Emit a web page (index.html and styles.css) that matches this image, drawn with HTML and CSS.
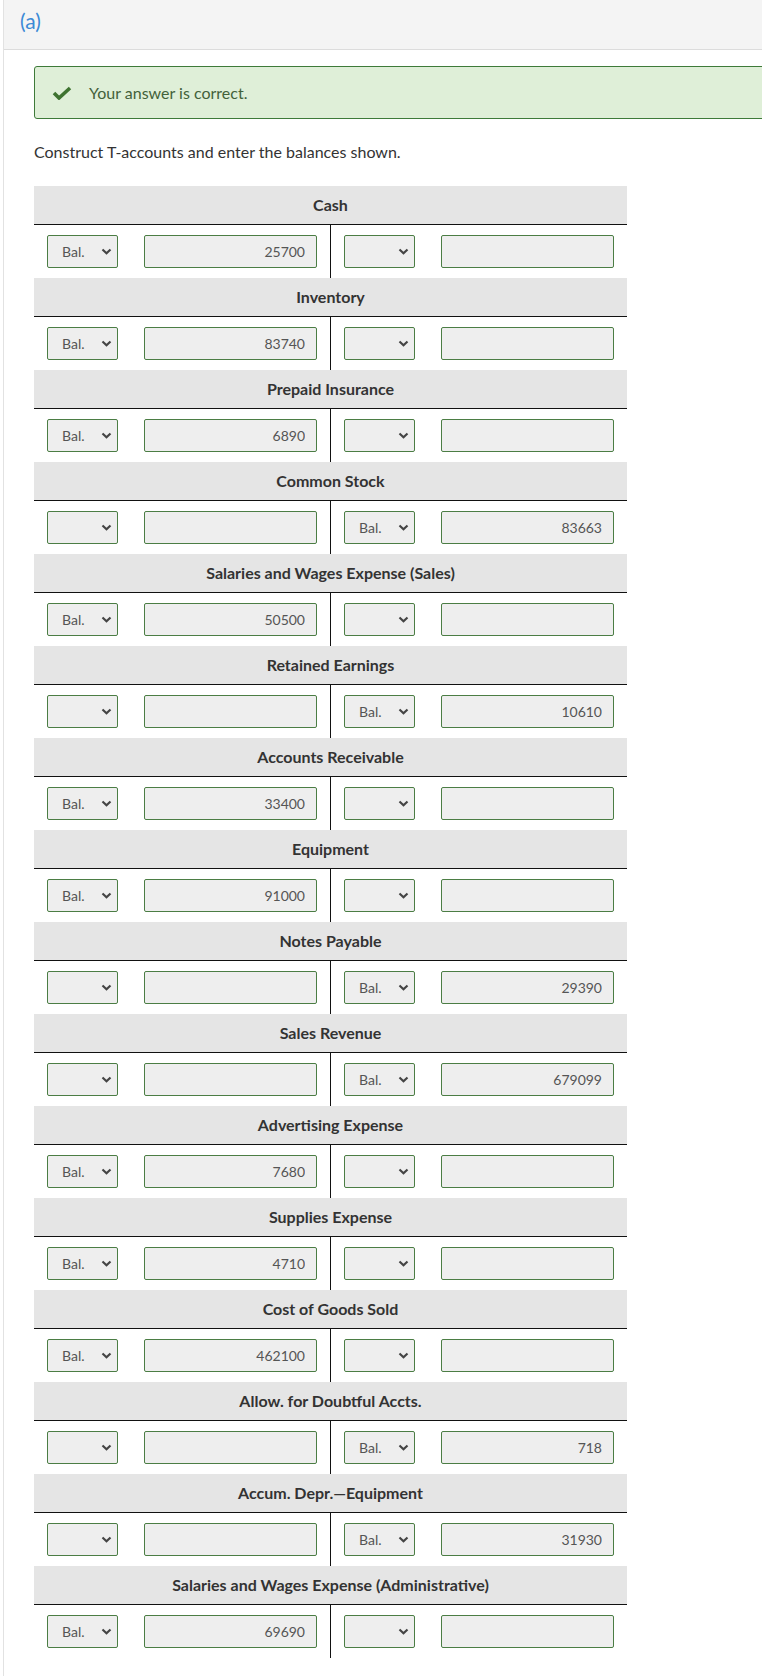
FILE: index.html
```html
<!DOCTYPE html>
<html lang="en">

<head>
    <meta charset="UTF-8">
    <title>T-accounts</title>
    <link rel="stylesheet" href="styles.css">
</head>

<body>
    <div class="panel">
        <div class="panel-head">(a)</div>

        <div class="panel-body">
            <div class="feedback">
                <svg class="feedback-icon" width="20" height="14" viewBox="0 0 20 14">
                    <polyline points="2,7 7,12 18,2" fill="none" stroke="#3e7330" stroke-width="3.6" />
                </svg>
                <span>Your answer is correct.</span>
            </div>

            <p class="question">Construct T-accounts and enter the balances shown.</p>

            <div id="accounts" class="accounts"></div>
        </div>
    </div>

    <script>
        /* side: 'dr' = balance on the left, 'cr' = balance on the right */
        var accounts = [
            ['Cash', 'dr', '25700'],
            ['Inventory', 'dr', '83740'],
            ['Prepaid Insurance', 'dr', '6890'],
            ['Common Stock', 'cr', '83663'],
            ['Salaries and Wages Expense (Sales)', 'dr', '50500'],
            ['Retained Earnings', 'cr', '10610'],
            ['Accounts Receivable', 'dr', '33400'],
            ['Equipment', 'dr', '91000'],
            ['Notes Payable', 'cr', '29390'],
            ['Sales Revenue', 'cr', '679099'],
            ['Advertising Expense', 'dr', '7680'],
            ['Supplies Expense', 'dr', '4710'],
            ['Cost of Goods Sold', 'dr', '462100'],
            ['Allow. for Doubtful Accts.', 'cr', '718'],
            ['Accum. Depr.\u2014Equipment', 'cr', '31930'],
            ['Salaries and Wages Expense (Administrative)', 'dr', '69690']
        ];

        var chevron = '<svg class="chevron" width="11" height="7" viewBox="0 0 11 7">' +
            '<polyline points="1.5,1.5 5.5,5.2 9.5,1.5" fill="none" stroke="#444" stroke-width="2.2" /></svg>';

        function side(bal, amount) {
            return '<div class="t-side">' +
                '<div class="pick"><select class="pick-select">' +
                '<option>' + (bal ? 'Bal.' : '') + '</option></select>' + chevron + '</div>' +
                '<input class="amount" type="text" value="' + amount + '">' +
                '</div>';
        }

        var html = '';
        accounts.forEach(function (a) {
            var dr = a[1] === 'dr';
            html += '<div class="t-account">' +
                '<div class="t-title">' + a[0] + '</div>' +
                '<div class="t-row">' +
                side(dr, dr ? a[2] : '') +
                side(!dr, dr ? '' : a[2]) +
                '</div></div>';
        });
        document.querySelector('#accounts').innerHTML = html;
    </script>
</body>

</html>
```

FILE: styles.css
```css
html,
body {
    margin: 0px;
    padding: 0px;
}

body {
    font-family: Lato, "Liberation Sans", sans-serif;
    color: #333;
    background-color: #fff;
}

.panel {
    min-height: 1676px;
    margin-left: 3px;
    border-left: 1px solid #e2e2e2;
    /* the panel runs on past the right edge of the window */
    overflow: hidden;
}

.panel-head {
    height: 49px;
    padding-left: 16px;
    line-height: 42px;
    font-size: 21px;
    color: #3b8ad6;
    background-color: #f4f4f4;
    border-bottom: 1px solid #dcdcdc;
}

.panel-body {
    padding: 16px 0px 0px 30px;
}

.feedback {
    display: flex;
    align-items: center;
    height: 51px;
    margin-right: -20px;
    border: 1px solid #3e7a39;
    border-radius: 3px;
    background-color: #dfefd8;
    font-size: 16px;
    color: #43613a;
}

.feedback-icon {
    margin: 0px 17px 0px 17px;
}

.question {
    margin: 23px 0px 0px 0px;
    font-size: 16px;
    line-height: 20px;
    color: #333;
}

.accounts {
    width: 593px;
    margin-top: 24px;
}

.t-title {
    height: 38px;
    line-height: 38px;
    text-align: center;
    font-size: 16px;
    font-weight: bold;
    color: #333;
    background-color: #e5e5e5;
    border-bottom: 1px solid #111;
}

.t-row {
    display: flex;
}

.t-side {
    display: flex;
    gap: 26px;
    width: 270px;
    padding: 10px 13px 10px 13px;
}

.t-side + .t-side {
    border-left: 1px solid #111;
}

.pick {
    position: relative;
    width: 71px;
    height: 33px;
}

.pick-select {
    appearance: none;
    -webkit-appearance: none;
    width: 71px;
    height: 33px;
    padding: 0px 0px 0px 14px;
    border: 1px solid #4b7d44;
    border-radius: 2px;
    background-color: #eee;
    font-family: Lato, "Liberation Sans", sans-serif;
    font-size: 14px;
    color: #555;
}

.chevron {
    position: absolute;
    top: 13px;
    right: 6px;
}

.amount {
    box-sizing: border-box;
    width: 173px;
    height: 33px;
    padding: 0px 11px 0px 6px;
    border: 1px solid #4b7d44;
    border-radius: 2px;
    background-color: #eee;
    text-align: right;
    font-family: Lato, "Liberation Sans", sans-serif;
    font-size: 14px;
    color: #555;
}
```
